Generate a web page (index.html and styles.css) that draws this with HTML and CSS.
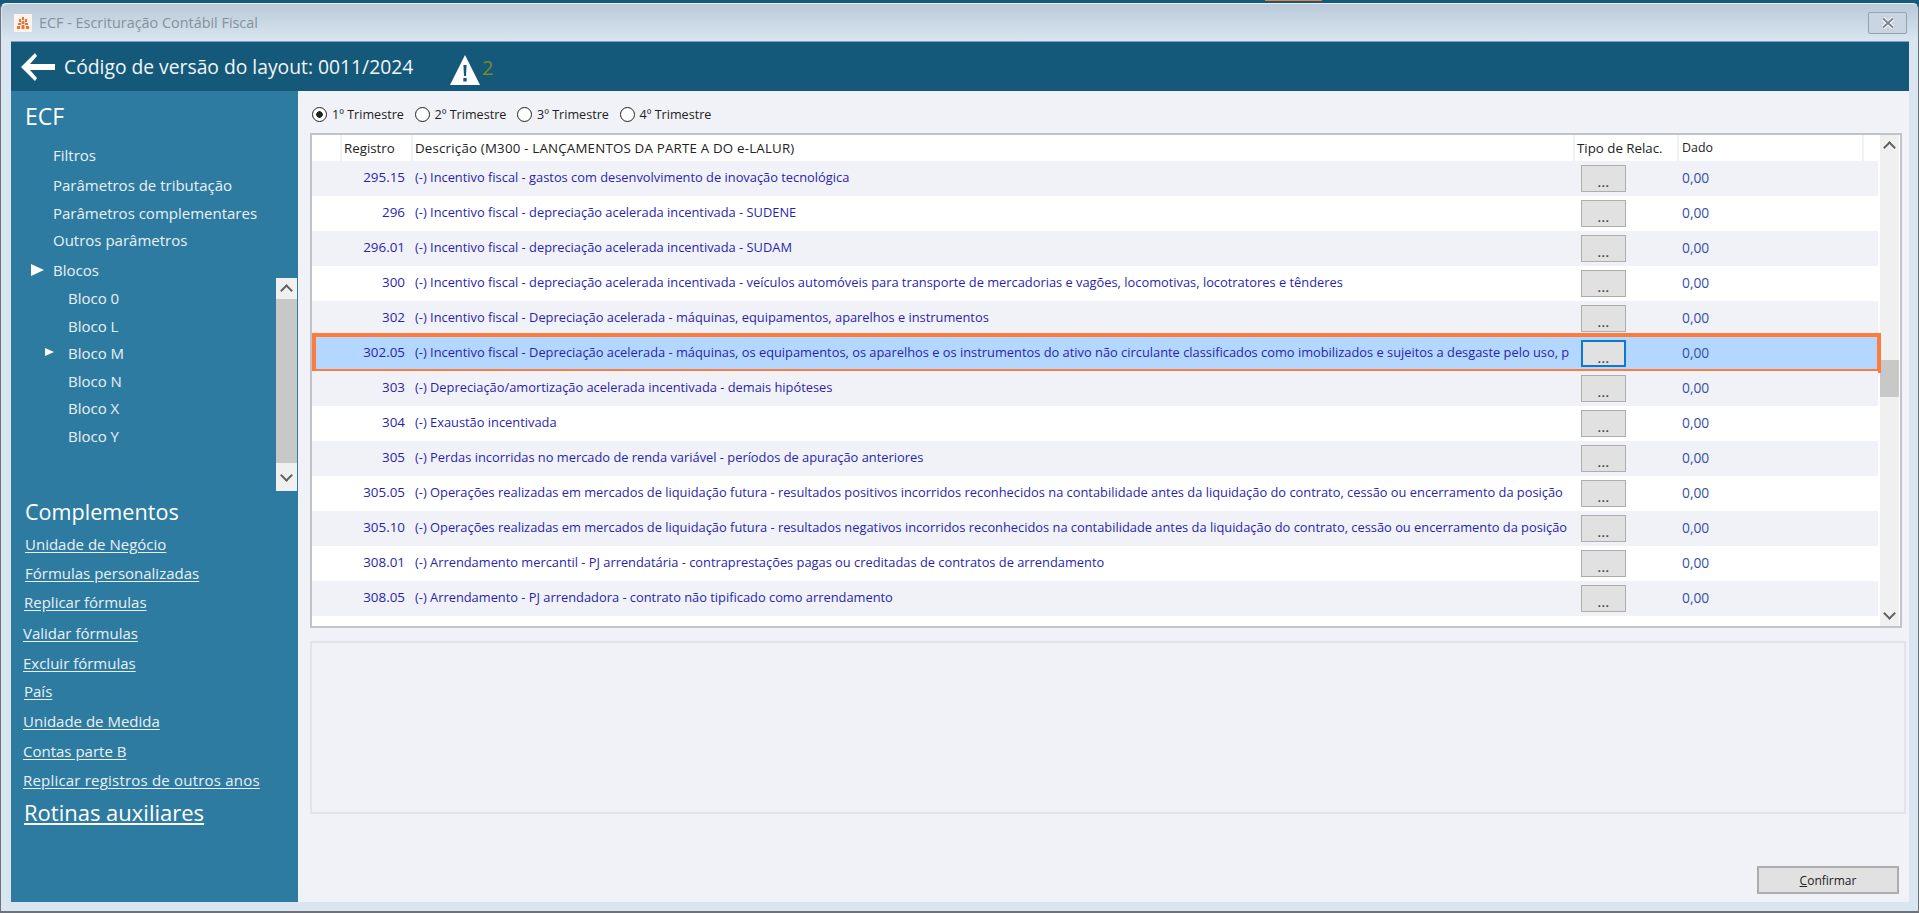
FILE: index.html
```html
<!DOCTYPE html>
<html lang="pt-BR">
<head>
    <meta charset="UTF-8">
    <title>ECF - Escrituração Contábil Fiscal</title>
    <link rel="stylesheet" href="styles.css">
</head>
<body>
    <div class="top-strip"><span class="top-accent"></span></div>
    <div class="window">
        <div class="titlebar">
            <svg class="app-icon" viewBox="0 0 18 18">
                <rect width="18" height="18" fill="#fdf3ec"/>
                <path d="M8 3h2v3H8zM5 5h2v3H5zM11 5h2v3h-2zM7.5 7h3v3h-3zM4 9h3v2H4zM11 9h3v2h-3zM3 12h3v3H3zM7.5 11h3v4h-3zM12 12h3v3h-3z" fill="#ee7232"/>
            </svg>
            <span class="window-title">ECF - Escrituração Contábil Fiscal</span>
            <button class="btn-close">
                <svg viewBox="0 0 14 12" width="14" height="12">
                    <path d="M2 1.5l10 9M12 1.5l-10 9" stroke="#fff" stroke-width="4"/>
                    <path d="M2 1.5l10 9M12 1.5l-10 9" stroke="#7d8790" stroke-width="2"/>
                </svg>
            </button>
        </div>

        <header class="app-header">
            <svg class="back-arrow" viewBox="0 0 34 28">
                <path d="M14 0L0 14l14 14 2-3-7-8h25v-6H9l7-8z" fill="#fff"/>
            </svg>
            <h1>Código de versão do layout: 0011/2024</h1>
            <svg class="warn-icon" viewBox="0 0 30 30">
                <path d="M15 0L30 30H0z" fill="#fff"/>
                <path d="M13.4 10h3.2l-.6 11h-2zM13.3 23h3.4v3.4h-3.4z" fill="#15597a"/>
            </svg>
            <span class="warn-count">2</span>
        </header>

        <div class="app-body">
            <!-- Sidebar -->
            <aside class="sidebar">
                <h2 class="side-title">ECF</h2>
                <ul class="side-menu">
                    <li>Filtros</li>
                    <li>Parâmetros de tributação</li>
                    <li>Parâmetros complementares</li>
                    <li>Outros parâmetros</li>
                    <li class="expanded">Blocos</li>
                </ul>
                <div class="blocos">
                    <ul class="blocos-list">
                        <li>Bloco 0</li>
                        <li>Bloco L</li>
                        <li class="current">Bloco M</li>
                        <li>Bloco N</li>
                        <li>Bloco X</li>
                        <li>Bloco Y</li>
                    </ul>
                    <div class="scrollbar side-scroll">
                        <span class="arrow arrow-up"></span>
                        <span class="thumb"></span>
                        <span class="arrow arrow-down"></span>
                    </div>
                </div>
                <h2 class="side-heading">Complementos</h2>
                <div class="side-links">
                    <a>Unidade de Negócio</a>
                    <a>Fórmulas personalizadas</a>
                    <a>Replicar fórmulas</a>
                    <a>Validar fórmulas</a>
                    <a>Excluir fórmulas</a>
                    <a>País</a>
                    <a>Unidade de Medida</a>
                    <a>Contas parte B</a>
                    <a>Replicar registros de outros anos</a>
                </div>
                <a class="side-big-link">Rotinas auxiliares</a>
            </aside>

            <!-- Main content -->
            <main class="content">
                <div class="quarters">
                    <label class="radio checked">1º Trimestre</label>
                    <label class="radio">2º Trimestre</label>
                    <label class="radio">3º Trimestre</label>
                    <label class="radio">4º Trimestre</label>
                </div>

                <div class="grid-box">
                    <div class="grid">
                        <div class="grid-head">
                            <span></span>
                            <span>Registro</span>
                            <span>Descrição (M300 - LANÇAMENTOS DA PARTE A DO e-LALUR)</span>
                            <span>Tipo de Relac.</span>
                            <span>Dado</span>
                        </div>
                        <div class="row"><span></span><span class="reg">295.15</span><span class="desc">(-) Incentivo fiscal - gastos com desenvolvimento de inovação tecnológica</span><span class="tipo"><button class="btn-dots">...</button></span><span class="dado">0,00</span></div>
                        <div class="row"><span></span><span class="reg">296</span><span class="desc">(-) Incentivo fiscal - depreciação acelerada incentivada - SUDENE</span><span class="tipo"><button class="btn-dots">...</button></span><span class="dado">0,00</span></div>
                        <div class="row"><span></span><span class="reg">296.01</span><span class="desc">(-) Incentivo fiscal - depreciação acelerada incentivada - SUDAM</span><span class="tipo"><button class="btn-dots">...</button></span><span class="dado">0,00</span></div>
                        <div class="row"><span></span><span class="reg">300</span><span class="desc">(-) Incentivo fiscal - depreciação acelerada incentivada - veículos automóveis para transporte de mercadorias e vagões, locomotivas, locotratores e tênderes</span><span class="tipo"><button class="btn-dots">...</button></span><span class="dado">0,00</span></div>
                        <div class="row"><span></span><span class="reg">302</span><span class="desc">(-) Incentivo fiscal - Depreciação acelerada - máquinas, equipamentos, aparelhos e instrumentos</span><span class="tipo"><button class="btn-dots">...</button></span><span class="dado">0,00</span></div>
                        <div class="row selected"><span></span><span class="reg">302.05</span><span class="desc">(-) Incentivo fiscal - Depreciação acelerada - máquinas, os equipamentos, os aparelhos e os instrumentos do ativo não circulante classificados como imobilizados e sujeitos a desgaste pelo uso, p</span><span class="tipo"><button class="btn-dots focused">...</button></span><span class="dado">0,00</span></div>
                        <div class="row"><span></span><span class="reg">303</span><span class="desc">(-) Depreciação/amortização acelerada incentivada - demais hipóteses</span><span class="tipo"><button class="btn-dots">...</button></span><span class="dado">0,00</span></div>
                        <div class="row"><span></span><span class="reg">304</span><span class="desc">(-) Exaustão incentivada</span><span class="tipo"><button class="btn-dots">...</button></span><span class="dado">0,00</span></div>
                        <div class="row"><span></span><span class="reg">305</span><span class="desc">(-) Perdas incorridas no mercado de renda variável - períodos de apuração anteriores</span><span class="tipo"><button class="btn-dots">...</button></span><span class="dado">0,00</span></div>
                        <div class="row"><span></span><span class="reg">305.05</span><span class="desc">(-) Operações realizadas em mercados de liquidação futura - resultados positivos incorridos reconhecidos na contabilidade antes da liquidação do contrato, cessão ou encerramento da posição</span><span class="tipo"><button class="btn-dots">...</button></span><span class="dado">0,00</span></div>
                        <div class="row"><span></span><span class="reg">305.10</span><span class="desc">(-) Operações realizadas em mercados de liquidação futura - resultados negativos incorridos reconhecidos na contabilidade antes da liquidação do contrato, cessão ou encerramento da posição</span><span class="tipo"><button class="btn-dots">...</button></span><span class="dado">0,00</span></div>
                        <div class="row"><span></span><span class="reg">308.01</span><span class="desc">(-) Arrendamento mercantil - PJ arrendatária - contraprestações pagas ou creditadas de contratos de arrendamento</span><span class="tipo"><button class="btn-dots">...</button></span><span class="dado">0,00</span></div>
                        <div class="row"><span></span><span class="reg">308.05</span><span class="desc">(-) Arrendamento - PJ arrendadora - contrato não tipificado como arrendamento</span><span class="tipo"><button class="btn-dots">...</button></span><span class="dado">0,00</span></div>
                    </div>
                    <div class="scrollbar grid-scroll">
                        <span class="arrow arrow-up"></span>
                        <span class="thumb"></span>
                        <span class="arrow arrow-down"></span>
                    </div>
                </div>

                <div class="detail-panel"></div>

                <div class="actions">
                    <button class="btn-confirm"><u>C</u>onfirmar</button>
                </div>
            </main>
        </div>
    </div>
</body>
</html>
```

FILE: styles.css
```css
* {
    margin: 0;
    padding: 0;
    box-sizing: border-box;
}

html, body {
    height: 100%;
    overflow: hidden;
}

body {
    font-family: "Open Sans", "Noto Sans", sans-serif;
    background: #15597a;
    display: flex;
    flex-direction: column;
}

ul {
    list-style: none;
}

/* Window frame */
.top-strip {
    height: 3px;
    flex-shrink: 0;
    padding-left: 1265px;
}

.top-accent {
    display: block;
    width: 57px;
    height: 1px;
    background: #f08030;
}

.window {
    flex: 1;
    display: flex;
    flex-direction: column;
    padding: 0 9px 9px 10px;
    background: #d9e6f2;
    border: 1px solid #6d7378;
    border-top-color: #e4edf3;
    border-bottom-width: 2px;
    border-radius: 6px 6px 0 0;
    border-left-width: 1px;
}

.titlebar {
    height: 37px;
    margin: 0 -9px 0 -9px;
    padding: 0 11px 0 12px;
    display: flex;
    align-items: center;
    background: linear-gradient(#b9c9d7, #d9e6f2);
    border-radius: 6px 6px 0 0;
    flex-shrink: 0;
}

.app-icon {
    width: 18px;
    height: 18px;
    margin-right: 7px;
}

.window-title {
    font-size: 14.4px;
    color: #84919c;
}

.btn-close {
    margin-left: auto;
    width: 39px;
    height: 22px;
    display: flex;
    align-items: center;
    justify-content: center;
    background: #c9d6e1;
    border: 1px solid #93a3b1;
    border-radius: 2px;
}

/* Blue header */
.app-header {
    height: 50px;
    flex-shrink: 0;
    display: flex;
    align-items: center;
    padding-left: 10px;
    background: #15597a;
    border-top: 1px solid #7ea3b9;
}

.back-arrow {
    width: 34px;
    height: 28px;
    margin-right: 9px;
}

.app-header h1 {
    font-size: 19.3px;
    font-weight: 400;
    color: #f2f6f8;
    width: 386px;
    white-space: nowrap;
}

.warn-icon {
    width: 30px;
    height: 30px;
    margin-top: 7px;
}

.warn-count {
    font-size: 20px;
    color: #7a8a20;
    margin: 2px 0 0 2px;
}

.app-body {
    flex: 1;
    display: flex;
    min-height: 0;
}

/* Sidebar */
.sidebar {
    width: 287px;
    flex-shrink: 0;
    background: #2e7ba1;
    color: #e9f1f5;
    padding: 11px 1px 0 14px;
    font-size: 15px;
}

.side-title {
    font-size: 23px;
    font-weight: 400;
    line-height: 28px;
    color: #fff;
}

.side-menu {
    margin-top: 15px;
    padding-left: 28px;
}

.side-menu li {
    height: 20px;
    line-height: 20px;
    margin-bottom: 8px;
    position: relative;
}

.side-menu li:nth-child(1) { margin-bottom: 10px; }
.side-menu li:nth-child(3) { margin-bottom: 7px; }
.side-menu li:nth-child(4) { margin-bottom: 10px; }

.side-menu .expanded::before {
    content: '';
    position: absolute;
    left: -22px;
    top: 4px;
    border-left: 13px solid #fff;
    border-top: 6px solid transparent;
    border-bottom: 6px solid transparent;
}

.blocos {
    display: flex;
    justify-content: space-between;
    height: 213px;
    margin-top: -10px;
}

.blocos-list {
    padding: 7px 0 0 43px;
}

.blocos-list li {
    height: 27.6px;
    line-height: 27.6px;
    position: relative;
}

.blocos-list .current::before {
    content: '';
    position: absolute;
    left: -23px;
    top: 8px;
    border-left: 9px solid #fff;
    border-top: 4px solid transparent;
    border-bottom: 4px solid transparent;
}

.scrollbar {
    display: flex;
    flex-direction: column;
    background: #f0f0f0;
    flex-shrink: 0;
}

.arrow {
    height: 21px;
    flex-shrink: 0;
    display: flex;
    align-items: center;
    justify-content: center;
}

.arrow::before {
    content: '';
    width: 7px;
    height: 7px;
    border-left: 2px solid #606060;
    border-top: 2px solid #606060;
}

.arrow-up::before {
    transform: translateY(2px) rotate(45deg);
}

.arrow-down::before {
    transform: translateY(-2px) rotate(225deg);
}

.thumb {
    background: #c8c8c8;
}

.side-scroll {
    width: 21px;
}

.side-scroll .thumb {
    flex: 1;
}

.side-scroll .arrow-down {
    height: 28px;
}

.side-heading {
    font-size: 21.6px;
    font-weight: 400;
    line-height: 30px;
    margin-top: 6px;
    color: #fff;
}

.side-links {
    display: flex;
    flex-direction: column;
    align-items: flex-start;
    margin-top: 7px;
}

.side-links a {
    line-height: 20px;
    margin-bottom: 9px;
    text-decoration: underline;
    text-underline-offset: 2px;
}

.side-links a:nth-child(3) { margin: 0 0 11px -1px; }
.side-links a:nth-child(4) { margin: 0 0 10px -2px; }
.side-links a:nth-child(5) { margin: 0 0 8px -2px; }
.side-links a:nth-child(6) { margin: 0 0 10px -1px; }
.side-links a:nth-child(7) { margin: 0 0 10px -2px; }
.side-links a:nth-child(8) { margin: 0 0 9px -2px; }
.side-links a:nth-child(9) { margin: 0 0 0 -2px; letter-spacing: 0.2px; }

.side-big-link {
    display: block;
    font-size: 22px;
    line-height: 30px;
    margin: 7px 0 0 -1px;
    color: #fff;
    text-decoration: underline;
    text-underline-offset: 2px;
}

/* Main content */
.content {
    flex: 1;
    min-width: 0;
    background: #f1f2f8;
    padding-left: 12px;
    display: flex;
    flex-direction: column;
    font-size: 12.85px;
}

.quarters {
    height: 42px;
    display: flex;
    align-items: center;
    padding: 4px 0 0 2px;
    color: #222;
    font-size: 12.6px;
}

.radio {
    width: 102.5px;
    display: flex;
    align-items: center;
    gap: 5px;
}

.radio::before {
    content: '';
    width: 13px;
    height: 13px;
    border: 1px solid #222;
    border-radius: 50%;
    background: #fff;
}

.radio.checked::before {
    background: radial-gradient(circle, #222 0 3px, #fff 3.5px);
}

/* Grid */
.grid-box {
    width: 1592px;
    height: 495px;
    display: flex;
    background: #fff;
    border: 2px solid #c2c3c9;
    border-bottom-width: 2px;
    flex-shrink: 0;
}

.grid {
    width: 1566px;
    flex-shrink: 0;
}

.grid-head,
.row {
    display: grid;
    grid-template-columns: 30px 71px 1162px 104px 199px;
}

.grid-head {
    height: 26px;
    align-items: center;
    color: #222;
    background: #fff;
    font-size: 13.3px;
}

.grid-head span {
    height: 100%;
    line-height: 26px;
    padding-left: 2px;
    border-right: 2px solid #f1f2f8;
    overflow: hidden;
    white-space: nowrap;
}

.grid-head span:first-child {
    padding: 0;
}

.grid-head span:nth-child(3) {
    letter-spacing: 0.2px;
}

.grid-head span:last-child {
    width: 185px;
    padding-left: 3px;
    font-size: 12.4px;
}

.row {
    height: 35px;
    align-items: center;
    color: #2a1fae;
    position: relative;
}

.row:nth-child(even) {
    background: #f1f2f8;
}

.row:nth-child(odd) {
    background: #fff;
}

.row.selected {
    background: #b3d7ff;
}

.row.selected::after {
    content: '';
    position: absolute;
    inset: -3px -3px -2px 0;
    border: 4px solid #ff7a3d;
    pointer-events: none;
}

.reg,
.desc,
.dado {
    padding-bottom: 3px;
}

.reg {
    text-align: right;
    padding-right: 8px;
    font-size: 13.4px;
}

.desc {
    padding-left: 2px;
    white-space: nowrap;
    overflow: hidden;
}

.tipo {
    padding-left: 6px;
    display: flex;
}

.btn-dots {
    width: 45px;
    height: 27px;
    background: #e1e1e1;
    border: 1px solid #adadad;
    font: 600 13px "Open Sans", sans-serif;
    color: #444;
    padding-top: 7px;
    letter-spacing: 0.5px;
}

.btn-dots.focused {
    border: 2px solid #0a78d4;
}

.dado {
    padding-left: 3px;
    color: #3350a8;
    font-size: 13.8px;
}

.grid-scroll {
    width: 19px;
    margin: 0 1px 0 2px;
}

.grid-scroll .thumb {
    height: 37px;
    margin-top: 204px;
}

.grid-scroll .arrow-down {
    margin-top: auto;
}

/* Bottom */
.detail-panel {
    width: 1596px;
    height: 173px;
    margin-top: 13px;
    border: 2px solid #e3e4e8;
    flex-shrink: 0;
}

.actions {
    flex: 1;
    display: flex;
    justify-content: flex-end;
    align-items: flex-end;
    padding: 0 10px 8px 0;
}

.btn-confirm {
    width: 142px;
    height: 28px;
    background: #e1e1e1;
    border: 2px solid #adadad;
    font: 12px "Open Sans", sans-serif;
    color: #222;
}
```
